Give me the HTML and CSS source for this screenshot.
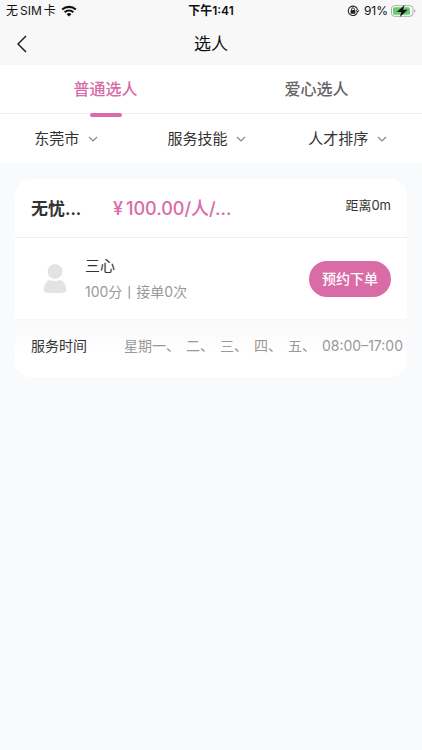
FILE: index.html
```html
<!DOCTYPE html>
<html lang="zh-CN">
<head>
<meta charset="utf-8">
<meta name="viewport" content="width=device-width, initial-scale=1">
<title>选人</title>
<link rel="stylesheet" href="styles.css">
</head>
<body>
<header class="top">
  <div class="status">
    <div class="status-left">
      <span class="carrier">无<span class="latin">SIM</span>卡</span>
      <svg class="wifi" viewBox="0 0 16 12" aria-hidden="true">
        <path d="M1.2 4.6a9.8 9.8 0 0 1 13.6 0M3.7 7.2a6.2 6.2 0 0 1 8.6 0" fill="none" stroke="#111" stroke-width="2.1"/>
        <path d="M8 11.6 5.6 9.2a3.4 3.4 0 0 1 4.8 0z" fill="#111"/>
      </svg>
    </div>
    <time class="clock">下午1:41</time>
    <div class="status-right">
      <svg class="lock" viewBox="0 0 12 12" aria-hidden="true">
        <path d="M10.4 7.4A4.7 4.7 0 1 1 10.6 5M9.2 5.4l1.5 1.4 1.2-1.5" fill="none" stroke="#222" stroke-width="1.1"/>
        <rect x="3.6" y="5.1" width="4.8" height="3.6" rx=".5" fill="#222"/>
        <path d="M4.6 5.4V4.200a1.400 1.400 0 0 1 2.800 0v1.200" fill="none" stroke="#222" stroke-width=".9"/>
      </svg>
      <span>91%</span>
      <svg class="battery" viewBox="0 0 25 12" aria-hidden="true">
        <rect x=".5" y=".7" width="21.4" height="10.6" rx="3" fill="#fff" stroke="#a9a9a9"/>
        <rect x="2" y="2.2" width="17" height="7.6" rx="1.6" fill="#65cb6c"/>
        <path d="M23.2 4.2v3.6q1.3-.6 1.3-1.800t-1.300-1.800z" fill="#a9a9a9"/>
        <path d="M13.600 0 5.800 7h4.600L8.800 12l7.800-7.200H12z" fill="#111"/>
      </svg>
    </div>
  </div>
  <div class="navbar">
    <button class="back" type="button" aria-label="返回">
      <svg viewBox="0 0 12 18" aria-hidden="true"><path d="M10 1 2 9l8 8" fill="none" stroke="#111" stroke-width="1.4"/></svg>
    </button>
    <h1>选人</h1>
  </div>
</header>
<nav class="tabs">
  <a class="tab active" href="#normal">普通选人</a>
  <a class="tab" href="#care">爱心选人</a>
</nav>
<form class="filters">
  <div class="filter">
    <select aria-label="城市"><option>东莞市</option></select>
    <svg class="chevron" viewBox="0 0 10 6" aria-hidden="true"><path d="m1 1 4 4 4-4"/></svg>
  </div>
  <div class="filter">
    <select aria-label="技能"><option>服务技能</option></select>
    <svg class="chevron" viewBox="0 0 10 6" aria-hidden="true"><path d="m1 1 4 4 4-4"/></svg>
  </div>
  <div class="filter">
    <select aria-label="排序"><option>人才排序</option></select>
    <svg class="chevron" viewBox="0 0 10 6" aria-hidden="true"><path d="m1 1 4 4 4-4"/></svg>
  </div>
</form>
<main>
  <article class="card">
    <div class="card-head">
      <h2 class="service">无忧...</h2>
      <p class="price"><span class="currency">¥</span>100.00/人/...</p>
      <span class="distance">距离0m</span>
    </div>
    <div class="worker">
      <svg class="avatar" viewBox="0 0 24 31" aria-hidden="true">
        <circle cx="12" cy="8.500" r="7.900"/>
        <path d="M.3 27C.3 22 3 17.800 7 16.500q5 2.600 10 0c4 1.300 6.700 5.500 6.700 10.500 0 2-1.600 2.800-4 3.200q-7.700 1-15.400 0C1.900 29.800.3 29 .3 27z"/>
      </svg>
      <div class="worker-info">
        <h3>三心</h3>
        <p>100分丨接单0次</p>
      </div>
      <button class="book" type="button">预约下单</button>
    </div>
    <dl class="schedule">
      <dt>服务时间</dt>
      <dd>
        <span>星期一、</span>
        <span>二、</span>
        <span>三、</span>
        <span>四、</span>
        <span>五、</span>
        <span>08:00–17:00</span>
      </dd>
    </dl>
  </article>
</main>
</body>
</html>
```
FILE: styles.css
```css
* {
  box-sizing: border-box;
}

body {
  margin: 0;
  min-height: 100vh;
  background: #f9fafc;
  color: #333;
  font-family: Inter, "Noto Sans CJK SC", sans-serif;
  font-size: 14px;
  line-height: 20px;
}

h1, h2, h3, p, dl, dd {
  margin: 0;
}

button, select {
  padding: 0;
  border: 0;
  background: none;
  color: inherit;
  font: inherit;
}

.top {
  background: #f8f8f8;
  color: #111;
}

.status {
  display: grid;
  grid-template-columns: 1fr auto 1fr;
  align-items: center;
  height: 22px;
  padding: 0 6px;
  font-size: 12px;
}

.status-left, .status-right {
  display: flex;
  align-items: center;
  gap: 5px;
}

.status-right {
  justify-content: flex-end;
}

.latin {
  margin: 0 2px;
}

.wifi {
  width: 16px;
  height: 12px;
}

.clock {
  font-size: 12px;
  font-weight: 600;
}

.lock {
  width: 12px;
  height: 12px;
}

.battery {
  width: 25px;
  height: 12px;
  margin-left: -2px;
}

.navbar {
  display: grid;
  grid-template-columns: 44px 1fr 44px;
  align-items: center;
  height: 43px;
}

.back {
  display: flex;
  align-items: center;
  justify-content: center;
  height: 43px;
  cursor: pointer;
}

.back svg {
  width: 12px;
  height: 18px;
}

h1 {
  font-size: 17px;
  font-weight: 400;
  text-align: center;
}

.tabs {
  display: grid;
  grid-template-columns: 1fr 1fr;
  height: 49px;
  border-bottom: 1px solid #eee;
  background: #fff;
}

.tab {
  position: relative;
  color: #666;
  font-size: 16px;
  font-weight: 500;
  line-height: 48px;
  text-align: center;
  text-decoration: none;
}

.tab.active {
  color: #d96ba6;
}

.tab.active::after {
  content: "";
  position: absolute;
  bottom: -4px;
  left: calc(50% - 16px);
  width: 32px;
  height: 4px;
  border-radius: 2px;
  background: #d96ba6;
}

.filters {
  display: grid;
  grid-template-columns: repeat(3, 1fr);
  height: 49px;
  background: #fff;
}

.filter {
  display: flex;
  align-items: center;
  justify-content: center;
  gap: 8px;
  padding-right: 8px;
}

.filter select {
  appearance: none;
  font-size: 15px;
  line-height: 24px;
}

.chevron {
  width: 10px;
  height: 6px;
  fill: none;
  stroke: #888;
  stroke-width: 1.2;
}

main {
  padding: 16px 15px;
}

.card {
  overflow: hidden;
  border-radius: 16px;
  background: #fff;
}

.card-head {
  display: flex;
  align-items: center;
  height: 59px;
  padding: 2px 16px 0;
  border-bottom: 1px solid #eee;
}

.service {
  flex: none;
  width: 82px;
  font-size: 17px;
  font-weight: 600;
}

.price {
  flex: 1;
  color: #d96ba6;
  font-size: 18px;
  font-weight: 500;
  white-space: nowrap;
}

.currency {
  margin-right: 3px;
}

.distance {
  align-self: flex-start;
  margin-top: 14px;
  font-size: 13px;
}

.worker {
  display: flex;
  align-items: center;
  gap: 18px;
  height: 81px;
  padding: 0 16px 0 28px;
}

.avatar {
  width: 24px;
  height: 31px;
  fill: #e3e3e3;
  stroke: #fff;
  stroke-width: 1;
}

.worker-info {
  flex: 1;
}

h3 {
  margin-bottom: 6px;
  font-size: 15px;
  font-weight: 400;
}

.worker-info p {
  color: #999;
}

.book {
  padding: 8px 13px;
  border-radius: 18px;
  background: #d96ba6;
  color: #fff;
  font-weight: 500;
  cursor: pointer;
}

.schedule {
  display: flex;
  align-items: center;
  justify-content: space-between;
  height: 58px;
  padding: 0 4px 4px 16px;
  background: linear-gradient(#f8f8f8, #fff 60%);
  white-space: nowrap;
}

.schedule dd {
  display: flex;
  gap: 6px;
  color: #999;
}
```
